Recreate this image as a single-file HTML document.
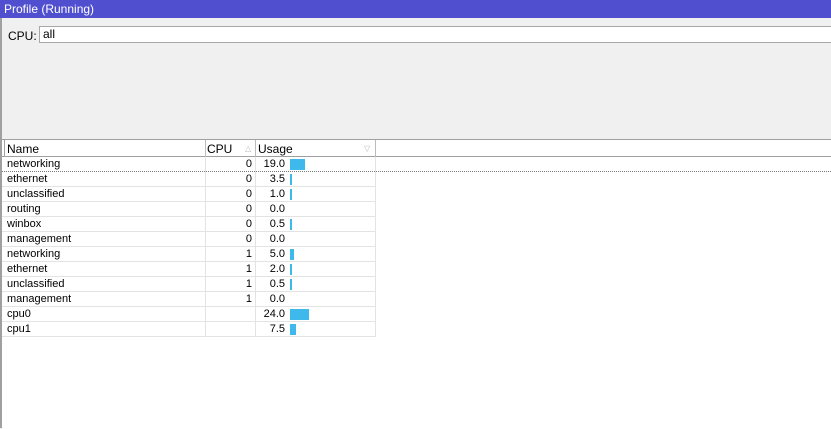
<html><head><style>
body{margin:0;width:831px;height:428px;overflow:hidden;background:#f0f0f0;font-family:"Liberation Sans",sans-serif;font-size:11px;color:#000;position:relative}
.t{position:absolute;left:0;top:0;width:831px;height:18px;background:#4f4fcf;color:#fff;font-size:12px;line-height:18px;padding-left:4px;box-sizing:border-box}
.lb{position:absolute;left:0;top:18px;width:2px;height:410px;background:#a0a0a0}
.cpu{position:absolute;left:8px;top:29px;font-size:12px}
.in{position:absolute;left:39px;top:26px;width:800px;height:17px;background:#fff;border:1px solid #a8a8a8;box-sizing:border-box;font-size:12px;padding-left:3px;line-height:15px}
.list{position:absolute;left:2px;top:139px;width:829px;height:289px;background:#fff;border-top:1px solid #a0a0a0}
.r{position:absolute;left:2px;height:15px;width:373px;border-bottom:1px solid #e3e3e3;box-sizing:border-box;font-size:11px;line-height:14px}
.r div{position:absolute;top:0;height:15px;box-sizing:border-box}
.n{left:5px}
.c{left:203px;width:47px;text-align:right}
.u{left:253px;width:30px;text-align:right}
.b{left:288px;top:2px!important;height:11px!important;background:#3fb9ec}
.vl{position:absolute;top:0;width:1px;height:180px;background:#e3e3e3}
.h{position:absolute;left:0;top:0;width:829px;height:17px;background:#fff;border-bottom:1px solid #a0a0a0;box-sizing:border-box;font-size:12px}
.h span{position:absolute;top:2px}
</style></head><body>
<div class="t">Profile (Running)</div>
<div class="lb"></div>
<div class="cpu">CPU:</div>
<div class="in">all</div>
<div class="list">
<div class="h"><span style="left:5px">Name</span><span style="left:205px">CPU</span><span style="left:243px;color:#bbb;font-size:8px;top:4px">△</span><span style="left:256px">Usage</span><span style="left:362px;color:#bbb;font-size:8px;top:4px">▽</span>
<div style="position:absolute;left:2px;top:0;width:1px;height:17px;background:#a0a0a0"></div>
<div style="position:absolute;left:203px;top:0;width:1px;height:17px;background:#bbb"></div>
<div style="position:absolute;left:253px;top:0;width:1px;height:17px;background:#bbb"></div>
<div style="position:absolute;left:373px;top:0;width:1px;height:17px;background:#bbb"></div></div>
<div class="vl" style="left:203px;top:17px"></div><div class="vl" style="left:253px;top:17px"></div><div class="vl" style="left:373px;top:17px"></div>
</div>
<div id="rows"></div>
<script>
var d=[["networking",0,"19.0",15],["ethernet",0,"3.5",2],["unclassified",0,"1.0",2],["routing",0,"0.0",0],["winbox",0,"0.5",2],["management",0,"0.0",0],["networking",1,"5.0",4],["ethernet",1,"2.0",2],["unclassified",1,"0.5",2],["management",1,"0.0",0],["cpu0","","24.0",19],["cpu1","","7.5",6]];
var h="";d.forEach(function(r,i){h+='<div class="r" style="top:'+(157+i*15)+'px'+(i==0?';border-bottom:1px dotted #777;width:829px':'')+'"><div class="n">'+r[0]+'</div><div class="c">'+r[1]+'</div><div class="u">'+r[2]+'</div>'+(r[3]?'<div class="b" style="width:'+r[3]+'px"></div>':'')+'</div>';});
document.getElementById("rows").innerHTML=h;
</script>
</body></html>
